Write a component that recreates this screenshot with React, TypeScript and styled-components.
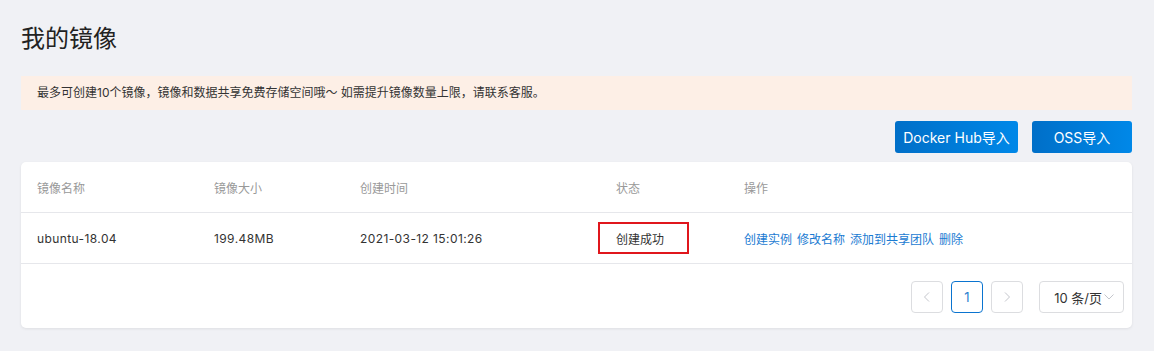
import { createGlobalStyle } from "styled-components";
import styled from "styled-components";

const GlobalStyle = createGlobalStyle`
  body {
    margin: 0;
    background: #f0f1f5;
    font-family: "Inter", "Noto Sans CJK SC", sans-serif;
    color: #333;
  }
`;

const columns = ["177px", "146px", "256px", "128px", "1fr"];

const images = [
  {
    name: "ubuntu-18.04",
    size: "199.48MB",
    createdAt: "2021-03-12 15:01:26",
    status: "创建成功",
  },
];

const actions = ["创建实例", "修改名称", "添加到共享团队", "删除"];

const App = () => {
  return (
    <Page>
      <GlobalStyle />
      <Title>{"我的镜像"}</Title>
      <Notice>
        {"最多可创建10个镜像，镜像和数据共享免费存储空间哦～ 如需提升镜像数量上限，请联系客服。"}
      </Notice>
      <Toolbar>
        <PrimaryBtn $width={123}>{"Docker Hub导入"}</PrimaryBtn>
        <PrimaryBtn $width={100}>{"OSS导入"}</PrimaryBtn>
      </Toolbar>
      <Card>
        <HeadRow>
          <HeadCell>{"镜像名称"}</HeadCell>
          <HeadCell>{"镜像大小"}</HeadCell>
          <HeadCell>{"创建时间"}</HeadCell>
          <HeadCell>{"状态"}</HeadCell>
          <HeadCell>{"操作"}</HeadCell>
        </HeadRow>
        {images.map((img) => (
          <BodyRow key={img.name}>
            <Cell $wide>{img.name}</Cell>
            <Cell $wide>{img.size}</Cell>
            <Cell $wide>{img.createdAt}</Cell>
            <Cell>
              <StatusBox>{img.status}</StatusBox>
            </Cell>
            <Cell>
              <Actions>
                {actions.map((a) => (
                  <ActionLink key={a}>{a}</ActionLink>
                ))}
              </Actions>
            </Cell>
          </BodyRow>
        ))}
        <Pager>
          <PageBtn>
            <svg width="12" height="12" viewBox="0 0 12 12">
              <path d="M8 1.5 L3.5 6 L8 10.5" fill="none" stroke="#c4c6cc" strokeWidth="1" />
            </svg>
          </PageBtn>
          <PageBtn $active>{"1"}</PageBtn>
          <PageBtn>
            <svg width="12" height="12" viewBox="0 0 12 12">
              <path d="M4 1.5 L8.5 6 L4 10.5" fill="none" stroke="#c4c6cc" strokeWidth="1" />
            </svg>
          </PageBtn>
          <SizeSelect>
            <span>{"10 条/页"}</span>
            <svg width="12" height="12" viewBox="0 0 12 12">
              <path d="M1.5 3.5 L6 8 L10.5 3.5" fill="none" stroke="#c4c6cc" strokeWidth="1" />
            </svg>
          </SizeSelect>
        </Pager>
      </Card>
    </Page>
  );
};

export default App;

const Page = styled.div`
  padding: 22px 22px 20px 21px;
`;

const Title = styled.h1`
  margin: 0;
  font-size: 24px;
  font-weight: 400;
  line-height: 34px;
  color: #222;
`;

const Notice = styled.div`
  margin-top: 20px;
  height: 34px;
  line-height: 34px;
  padding: 0 16px;
  font-size: 12px;
  color: #333;
  background: #fdefe6;
`;

const Toolbar = styled.div`
  display: flex;
  justify-content: flex-end;
  gap: 14px;
  margin-top: 11px;
`;

const PrimaryBtn = styled.button<{ $width: number }>`
  width: ${(p) => p.$width}px;
  height: 32px;
  border: none;
  border-radius: 3px;
  background: linear-gradient(90deg, #006fc8, #0088e8);
  color: #fff;
  font-family: inherit;
  font-size: 14px;
  padding: 0;
`;

const Card = styled.div`
  margin-top: 9px;
  background: #fff;
  border-radius: 5px;
  box-shadow: 0 1px 3px rgba(0, 0, 0, 0.08);
`;

const HeadRow = styled.div`
  display: grid;
  grid-template-columns: ${columns.join(" ")};
  padding-left: 16px;
  height: 50px;
  align-items: center;
  border-bottom: 1px solid #e6e7eb;
`;

const HeadCell = styled.div`
  font-size: 12px;
  color: #999;
`;

const BodyRow = styled(HeadRow)`
  height: 50px;
`;

const Cell = styled.div<{ $wide?: boolean }>`
  font-size: 12px;
  color: #333;
  letter-spacing: ${(p) => (p.$wide ? "0.4px" : "0")};
`;

const StatusBox = styled.div`
  display: inline-flex;
  align-items: center;
  box-sizing: border-box;
  width: 91px;
  height: 32px;
  margin-left: -18px;
  padding-left: 16px;
  border: 2px solid #e0161c;
`;

const Actions = styled.div`
  display: flex;
  gap: 5px;
`;

const ActionLink = styled.a`
  color: #1b7bd2;
  cursor: pointer;
`;

const Pager = styled.div`
  display: flex;
  justify-content: flex-end;
  align-items: center;
  gap: 8px;
  padding: 17px 8px 15px 0;
`;

const PageBtn = styled.div<{ $active?: boolean }>`
  box-sizing: border-box;
  width: 32px;
  height: 32px;
  display: flex;
  align-items: center;
  justify-content: center;
  border: 1px solid ${(p) => (p.$active ? "#0a74d0" : "#dcdde0")};
  border-radius: 4px;
  font-size: 13px;
  color: #2a80d0;
`;

const SizeSelect = styled.div`
  box-sizing: border-box;
  margin-left: 8px;
  width: 85px;
  height: 32px;
  display: flex;
  align-items: center;
  justify-content: flex-end;
  gap: 1px;
  padding-right: 8px;
  border: 1px solid #dcdde0;
  border-radius: 4px;
  font-size: 13px;
  color: #333;
`;
